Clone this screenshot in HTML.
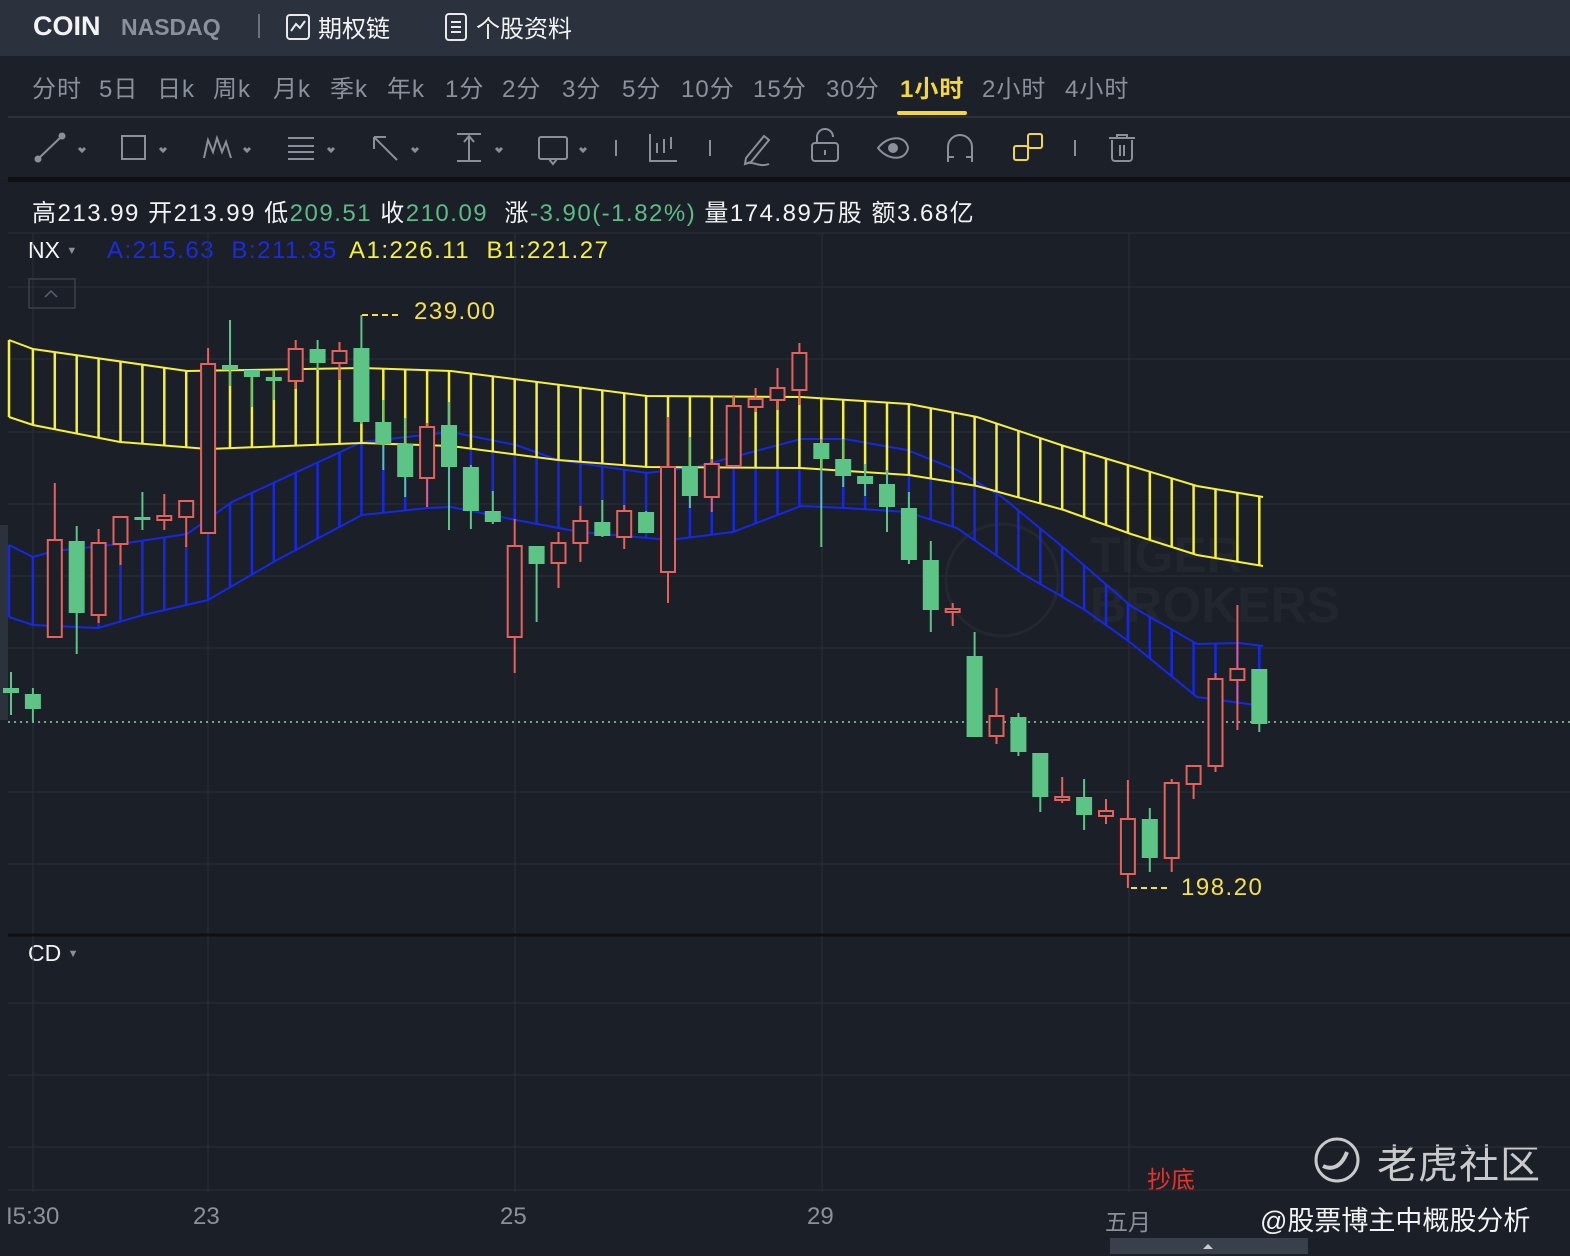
<!DOCTYPE html>
<html><head><meta charset="utf-8">
<style>
*{margin:0;padding:0;box-sizing:border-box}
body{width:1570px;height:1256px;background:#1b1f27;overflow:hidden;position:relative;font-family:"Liberation Sans","Noto Sans CJK SC",sans-serif;}
.abs{position:absolute;white-space:nowrap}
#hdr{position:absolute;left:0;top:0;width:1570px;height:56px;background:#2b323d}
#per{position:absolute;left:0;top:56px;width:1570px;height:122px;background:#1c2029}
.p{position:absolute;top:69px;font-size:24px;color:#8a919b;letter-spacing:1px}
svg{position:absolute;left:0;top:0}
</style></head><body>
<div id="hdr"></div>
<div id="per"></div>
<div class="abs" style="left:8px;top:116px;width:1562px;height:2px;background:#2c323b"></div>
<div class="abs" style="left:8px;top:177px;width:1562px;height:5px;background:#0e1014"></div>

<div class="abs" style="left:33px;top:11px;font-size:27px;font-weight:bold;color:#f2f3f5">COIN</div>
<div class="abs" style="left:121px;top:14px;font-size:23px;font-weight:bold;color:#8a919c">NASDAQ</div>
<div class="abs" style="left:258px;top:14px;width:2px;height:24px;background:#6b727c"></div>
<div class="abs" style="left:318px;top:9px;font-size:24px;color:#f2f3f5">期权链</div>
<div class="abs" style="left:476px;top:9px;font-size:24px;color:#f2f3f5">个股资料</div>

<div class="p" style="left:32px">分时</div>
<div class="p" style="left:99px">5日</div>
<div class="p" style="left:157px">日k</div>
<div class="p" style="left:213px">周k</div>
<div class="p" style="left:273px">月k</div>
<div class="p" style="left:330px">季k</div>
<div class="p" style="left:387px">年k</div>
<div class="p" style="left:445px">1分</div>
<div class="p" style="left:502px">2分</div>
<div class="p" style="left:562px">3分</div>
<div class="p" style="left:622px">5分</div>
<div class="p" style="left:681px">10分</div>
<div class="p" style="left:753px">15分</div>
<div class="p" style="left:826px">30分</div>
<div class="p" style="left:900px;color:#f5d63d;font-weight:bold">1小时</div>
<div class="abs" style="left:897px;top:111px;width:70px;height:4px;border-radius:2px;background:#f5d63d"></div>
<div class="p" style="left:982px">2小时</div>
<div class="p" style="left:1065px">4小时</div>

<div class="abs" style="left:32px;top:193px;font-size:24px;color:#f2f3f5;letter-spacing:1.5px">高213.99 开213.99 低<span style="color:#5bbd83">209.51</span> 收<span style="color:#5bbd83">210.09</span>&nbsp; 涨<span style="color:#5bbd83">-3.90(-1.82%)</span> 量174.89万股 额3.68亿</div>
<div class="abs" style="left:28px;top:237px;font-size:23px;color:#f2f3f5">NX <span style="font-size:11px;color:#8a909a;vertical-align:4px">▼</span></div>
<div class="abs" style="left:107px;top:237px;font-size:24px;color:#1a2be0;letter-spacing:1.5px">A:215.63&nbsp; B:211.35</div>
<div class="abs" style="left:349px;top:237px;font-size:24px;color:#f5f03a;letter-spacing:1.5px">A1:226.11&nbsp; B1:221.27</div>
<div class="abs" style="left:414px;top:298px;font-size:24px;color:#f5e04a;letter-spacing:1.5px">239.00</div>
<div class="abs" style="left:1181px;top:874px;font-size:24px;color:#f5e04a;letter-spacing:1.5px">198.20</div>
<div class="abs" style="left:28px;top:940px;font-size:23px;color:#f2f3f5">CD <span style="font-size:11px;color:#8a909a;vertical-align:4px">▼</span></div>
<div class="abs" style="left:6px;top:1203px;font-size:24px;color:#8a919b">I5:30</div>
<div class="abs" style="left:193px;top:1203px;font-size:24px;color:#8a919b">23</div>
<div class="abs" style="left:500px;top:1203px;font-size:24px;color:#8a919b">25</div>
<div class="abs" style="left:807px;top:1203px;font-size:24px;color:#8a919b">29</div>
<div class="abs" style="left:1105px;top:1203px;font-size:23px;color:#8a919b">五月</div>
<div class="abs" style="left:1147px;top:1160px;font-size:24px;color:#e8332a">抄底</div>
<div class="abs" style="left:1377px;top:1132px;font-size:40px;color:#c9cacc;letter-spacing:1px">老虎社区</div>
<div class="abs" style="left:1260px;top:1199px;font-size:27px;color:#f2f3f5">@股票博主中概股分析</div>
<div class="abs" style="left:1090px;top:530px;font-size:50px;font-weight:bold;color:#22262e;line-height:50px">TIGER<br>BROKERS</div>

<svg width="1570" height="1256" id="s" xmlns="http://www.w3.org/2000/svg">
<g stroke="#8a909a" stroke-width="2" fill="none">
 <rect x="287" y="15" width="22" height="24" rx="3" stroke="#e8e9eb"/>
 <path d="M291 31 l5 -7 4 4 5 -7" stroke="#e8e9eb"/>
 <rect x="446" y="14" width="20" height="26" rx="3" stroke="#e8e9eb"/>
 <path d="M451 22h10M451 27h10M451 32h10" stroke="#e8e9eb"/>
 <path d="M38 159 L62 136"/><circle cx="38" cy="159" r="2.5" fill="#8a909a"/><circle cx="62" cy="136" r="2.5" fill="#8a909a"/>
 <rect x="122" y="136" width="23" height="23"/>
 <path d="M204 158 l4 -18 5 12 4 -14 5 14 4 -10 5 16"/>
 <path d="M288 138h26M288 146h26M288 152h26M288 159h26" />
 <path d="M374 137 L397 160 M374 137 v12 M374 137 h12"/>
 <path d="M457 134h24M457 161h24M469 136v25 M464 142l5-6 5 6"/>
 <rect x="539" y="137" width="28" height="22" rx="2"/><path d="M549 159l4 5 4-5"/>
 <path d="M616 140v16M710 140v16M1075 140v16" stroke-width="2"/>
 <path d="M650 134v27h27M657 143v10M664 139v14M671 137v12"/>
 <path d="M746 158 l18 -22 5 4 -18 22 -6 2z M745 164 c8 -4 14 4 24 0"/>
 <rect x="812" y="143" width="26" height="18" rx="3"/><path d="M817 143v-6a8 8 0 0 1 16 0M825 150v5"/>
 <path d="M878 148c10-13 28-13 30 0c-2 13-20 13-30 0z"/><circle cx="893" cy="148" r="4" fill="#8a909a"/>
 <path d="M948 162v-15a12 12 0 0 1 24 0v15 M948 157h6 M966 157h6"/>
 <rect x="1014" y="146" width="14" height="14" rx="2" stroke="#f5d63d"/><rect x="1028" y="134" width="14" height="14" rx="2" stroke="#f5d63d"/>
 <path d="M1109 138h26M1117 138v-3h10v3M1112 140v18a3 3 0 0 0 3 3h14a3 3 0 0 0 3-3v-18M1120 145v11M1124 145v11"/>
 <path d="M79 148l3 3 3-3M160 148l3 3 3-3M244 148l3 3 3-3M328 148l3 3 3-3M412 148l3 3 3-3M496 148l3 3 3-3M580 148l3 3 3-3" stroke-width="3"/>
</g>
<g stroke="#282d36" stroke-width="1.2" id="grid"></g>
<rect x="29" y="279" width="46" height="29" fill="none" stroke="#3b414b" stroke-width="1.5"/>
<path d="M45 297l6-6 6 6" stroke="#596070" stroke-width="1.5" fill="none"/>
<rect x="0" y="525" width="8" height="195" fill="#2c323c"/>
<circle cx="1002" cy="580" r="56" fill="none" stroke="#23272f" stroke-width="3"/>
<line x1="8" y1="935" x2="1570" y2="935" stroke="#0e1014" stroke-width="3"/>
<line x1="8" y1="722" x2="1570" y2="722" stroke="#8fd4a8" stroke-width="1.5" stroke-dasharray="2 4"/>
<g id="bands"></g>
<g id="candles"></g>
<path d="M362 315h40M1131 888h40" stroke="#f5e04a" stroke-width="2" stroke-dasharray="6 4"/>
<circle cx="1337" cy="1160" r="21" fill="none" stroke="#c9cacc" stroke-width="3"/>
<path d="M1323 1166c8 4 18 2 24-14" stroke="#c9cacc" stroke-width="4" fill="none"/>
<rect x="1110" y="1238" width="198" height="16" fill="#3a404b"/>
<path d="M1203 1249l5-5 5 5z" fill="#c9cacc"/>
</svg>
<script>
const NS="http://www.w3.org/2000/svg";
function el(p,t,a){const e=document.createElementNS(NS,t);for(const k in a)e.setAttribute(k,a[k]);document.getElementById(p).appendChild(e);return e;}
[233,287,359,432,504,576,648,792,864,1003,1075,1147,1190].forEach(y=>el('grid','line',{x1:8,x2:1570,y1:y,y2:y}));
[33,208,515,822,1129].forEach(x=>el('grid','line',{x1:x,x2:x,y1:233,y2:1192}));
function interp(pts,x){if(x<=pts[0][0])return pts[0][1];for(let i=1;i<pts.length;i++){if(x<=pts[i][0]){const a=pts[i-1],b=pts[i];return a[1]+(b[1]-a[1])*(x-a[0])/(b[0]-a[0]);}}return pts[pts.length-1][1];}
const yU=[[9,340],[33,349],[187,371],[362,368],[451,371],[647,396],[801,397],[909,404],[977,417],[1064,446],[1131,466],[1197,486],[1263,497]];
const yL=[[9,417],[33,425],[120,442],[208,449],[362,443],[451,446],[558,460],[647,467],[801,468],[909,475],[977,486],[1064,510],[1131,534],[1197,555],[1263,566]];
const bU=[[9,545],[33,557],[54,551],[120,544],[187,534],[232,502],[362,442],[451,432],[516,445],[558,460],[647,473],[696,467],[801,439],[845,439],[907,450],[957,470],[1002,497],[1064,548],[1131,606],[1197,644],[1239,643],[1263,646]];
const bL=[[9,617],[33,625],[98,628],[143,615],[208,600],[277,560],[362,515],[428,508],[451,507],[516,520],[580,532],[670,540],[733,532],[801,506],[845,508],[907,512],[957,528],[1023,574],[1085,610],[1131,643],[1197,697],[1263,706]];
const xs=[];for(let i=0;i<58;i++)xs.push(11+i*21.9);
const hx=[9].concat(xs.slice(1));
function band(U,L,col){let d='';hx.forEach(x=>{d+=`M${x} ${interp(U,x)}V${interp(L,x)}`;});
 el('bands','path',{d,stroke:col,'stroke-width':2.5,fill:'none'});
 el('bands','polyline',{points:U.map(p=>p.join(',')).join(' '),stroke:col,'stroke-width':2,fill:'none'});
 el('bands','polyline',{points:L.map(p=>p.join(',')).join(' '),stroke:col,'stroke-width':2,fill:'none'});}
band(bU,bL,'#1428e6');
band(yU,yL,'#f5f03a');
const C=[
['g',688,693,672,715],['g',694,709,688,722],['r',540,637,483,637],['g',541,613,526,654],['r',543,615,529,623],['r',517,544,517,565],['g',517,520,492,530],['r',516,520,494,530],['r',501,517,501,547],['r',364,533,348,533],
['g',365,370,320,386],['g',370,377,370,407],['g',377,381,370,400],['r',349,381,340,389],['g',349,363,340,370],['r',351,363,342,380],['g',348,422,315,424],['g',422,444,400,470],['g',444,477,418,497],['r',427,478,423,507],
['g',425,467,402,530],['g',467,511,465,529],['g',511,522,491,524],['r',546,637,519,673],['g',546,564,546,622],['r',543,563,532,588],['r',521,543,506,562],['g',522,536,500,537],['r',511,537,505,549],['g',512,533,511,533],
['r',467,572,417,603],['g',466,496,437,508],['r',464,497,459,512],['r',406,466,395,466],['r',399,407,388,412],['r',388,400,368,410],['r',353,390,343,405],['g',443,459,439,547],['g',459,476,439,487],['g',476,484,464,496],
['g',484,507,470,532],['g',508,560,492,564],['g',560,610,541,632],['r',609,612,603,626],['g',656,737,632,737],['r',716,736,688,744],['g',717,752,713,756],['g',753,797,753,812],['r',797,799,777,803],['g',797,815,779,830],
['r',811,816,799,824],['r',819,874,780,888],['g',819,858,808,872],['r',783,858,779,872],['r',766,784,766,799],['r',679,766,673,772],['r',669,680,605,730],['g',669,724,669,732]];
C.forEach((c,i)=>{const x=xs[i],col=c[0]=='g'?'#5cc585':'#e8605a';
 el('candles','line',{x1:x,x2:x,y1:c[3],y2:c[4],stroke:col,'stroke-width':2});
 let h=Math.max(c[2]-c[1],3);
 if(c[0]=='g')el('candles','rect',{x:x-8,y:c[1],width:16,height:h,fill:col});
 else el('candles','rect',{x:x-7,y:c[1],width:14,height:h,fill:'#1b1f27',stroke:col,'stroke-width':2});
});
</script>
</body></html>
